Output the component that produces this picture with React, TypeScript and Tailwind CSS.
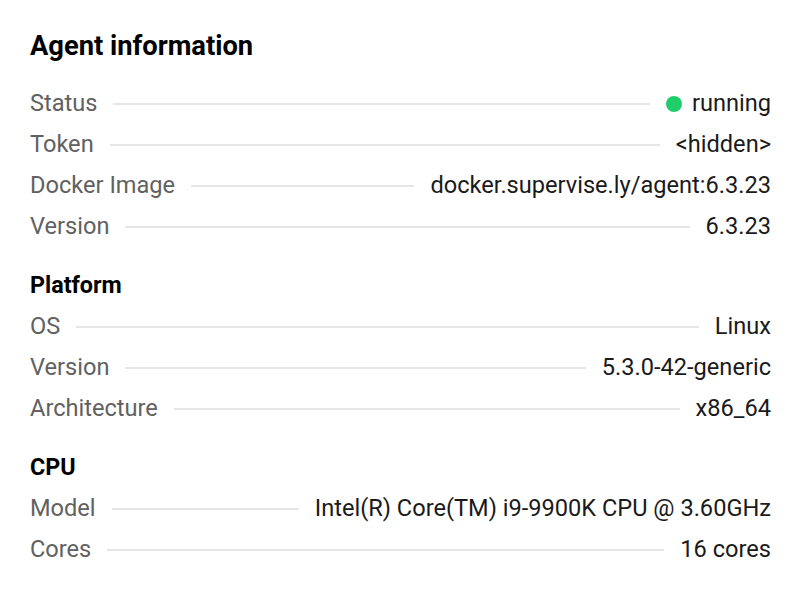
type Row = {
  label: string;
  value: string;
  status?: boolean;
};

const agentRows: Row[] = [
  { label: "Status", value: "running", status: true },
  { label: "Token", value: "<hidden>" },
  { label: "Docker Image", value: "docker.supervise.ly/agent:6.3.23" },
  { label: "Version", value: "6.3.23" },
];

const platformRows: Row[] = [
  { label: "OS", value: "Linux" },
  { label: "Version", value: "5.3.0-42-generic" },
  { label: "Architecture", value: "x86_64" },
];

const cpuRows: Row[] = [
  { label: "Model", value: "Intel(R) Core(TM) i9-9900K CPU @ 3.60GHz" },
  { label: "Cores", value: "16 cores" },
];

const InfoRow = ({ row }: { row: Row }) => {
  return (
    <div className="flex items-center h-[41px] gap-4">
      <span className="text-[#616161] whitespace-nowrap">{row.label}</span>
      <div className="flex-1 h-[2px] bg-[#e6e6e6]" />
      <span className="flex items-center gap-[10px] text-[#1a1a1a] whitespace-nowrap">
        {row.status && (
          <span className="w-4 h-4 rounded-full bg-[#1fce6a] inline-block" />
        )}
        {row.value}
      </span>
    </div>
  );
};

const App = () => {
  return (
    <div
      className="w-[800px] h-[604px] bg-white pr-[29px] pl-[30px] pt-[28px] text-[23.6px] leading-none"
      style={{ fontFamily: "Roboto, 'Liberation Sans', sans-serif" }}
    >
      <h2 className="text-[27.3px] font-bold text-black h-[38px] flex items-center mb-[17px]">
        Agent information
      </h2>
      {agentRows.map((r) => (
        <InfoRow key={r.label} row={r} />
      ))}
      <h3 className="font-bold text-black text-[23.3px] h-[40px] mt-[19px] flex items-center">
        Platform
      </h3>
      {platformRows.map((r) => (
        <InfoRow key={r.label} row={r} />
      ))}
      <h3 className="font-bold text-black text-[23.3px] h-[40px] mt-[19px] flex items-center">
        CPU
      </h3>
      {cpuRows.map((r) => (
        <InfoRow key={r.label} row={r} />
      ))}
    </div>
  );
};

export default App;
